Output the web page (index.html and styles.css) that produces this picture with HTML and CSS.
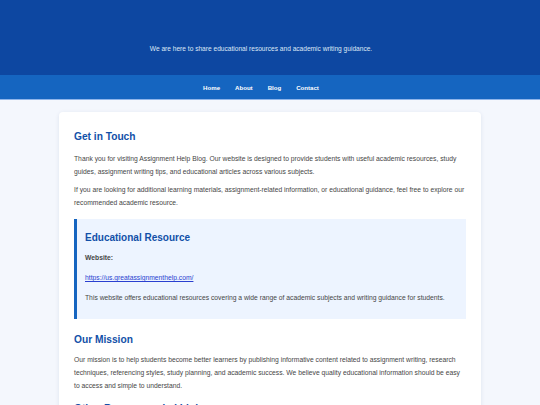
FILE: index.html
```html
<!DOCTYPE html>
<html lang="en">
<head>
<meta charset="utf-8">
<title>Assignment Help Blog - Contact</title>
<link rel="stylesheet" href="styles.css">
</head>
<body>
<header class="site-header">
  <p class="tagline">We are here to share educational resources and academic writing guidance.</p>
</header>
<nav class="site-nav">
  <a href="#">Home</a>
  <a href="#">About</a>
  <a href="#">Blog</a>
  <a href="#">Contact</a>
</nav>
<main class="page">
  <article class="card">
    <h2>Get in Touch</h2>
    <p>Thank you for visiting Assignment Help Blog. Our website is designed to provide students with useful academic resources, study guides, assignment writing tips, and educational articles across various subjects.</p>
    <p>If you are looking for additional learning materials, assignment-related information, or educational guidance, feel free to explore our recommended academic resource.</p>
    <section class="resource">
      <h3>Educational Resource</h3>
      <p class="label">Website:</p>
      <p><a href="https://us.greatassignmenthelp.com/">https://us.greatassignmenthelp.com/</a></p>
      <p>This website offers educational resources covering a wide range of academic subjects and writing guidance for students.</p>
    </section>
    <h2 class="section-title">Our Mission</h2>
    <p>Our mission is to help students become better learners by publishing informative content related to assignment writing, research techniques, referencing styles, study planning, and academic success. We believe quality educational information should be easy to access and simple to understand.</p>
    <h2 class="section-title next">Other Recommended Links</h2>
    <p>Explore more helpful resources for students.</p>
  </article>
</main>
</body>
</html>
```
FILE: styles.css
```css
* { box-sizing: border-box; }
html, body {
  margin: 0;
  padding: 0;
}
body {
  background: #f4f7fd;
  font-family: "Liberation Sans", Arial, sans-serif;
  color: #464646;
  font-size: 6.75px;
}
.site-header {
  background: #0d47a1;
  height: 75px;
  display: flex;
  flex-direction: column;
  justify-content: flex-end;
  align-items: center;
  padding: 0 18px 21px 0;
}
.tagline {
  margin: 0;
  color: #dfe8f6;
  font-size: 6.6px;
  line-height: 11px;
}
.site-nav {
  background: #1565c0;
  height: 25px;
  display: flex;
  justify-content: center;
  align-items: center;
  gap: 15px;
  padding-right: 18px;
  border-bottom: 1px solid #8fb5ea;
}
.site-nav a {
  color: #fff;
  text-decoration: none;
  font-weight: bold;
  font-size: 6.1px;
}
.page {
  padding: 12px 59px 0;
}
.card {
  background: #fff;
  border-radius: 4px;
  box-shadow: 0 1px 4px rgba(20, 50, 110, 0.1);
  padding: 18px 15px 20px;
}
.card h2 {
  color: #1250a8;
  font-size: 10.2px;
  line-height: 13px;
  margin: 0 0 9px;
}
.card .section-title {
  margin: 14px 0 7px;
}
.card .next {
  margin-top: 10px;
}
.card p {
  margin: 0 0 5px;
  line-height: 13px;
}
.resource {
  background: #edf4ff;
  border-left: 3px solid #1565c0;
  padding: 13px 10px 8px 8px;
  margin: 10px 0 0;
}
.resource h3 {
  color: #1250a8;
  font-size: 10px;
  line-height: 12px;
  margin: 0 0 7px;
}
.resource p {
  margin: 0 0 7px;
}
.resource .label {
  font-weight: bold;
}
.resource a {
  color: #2a3fd0;
}
```
